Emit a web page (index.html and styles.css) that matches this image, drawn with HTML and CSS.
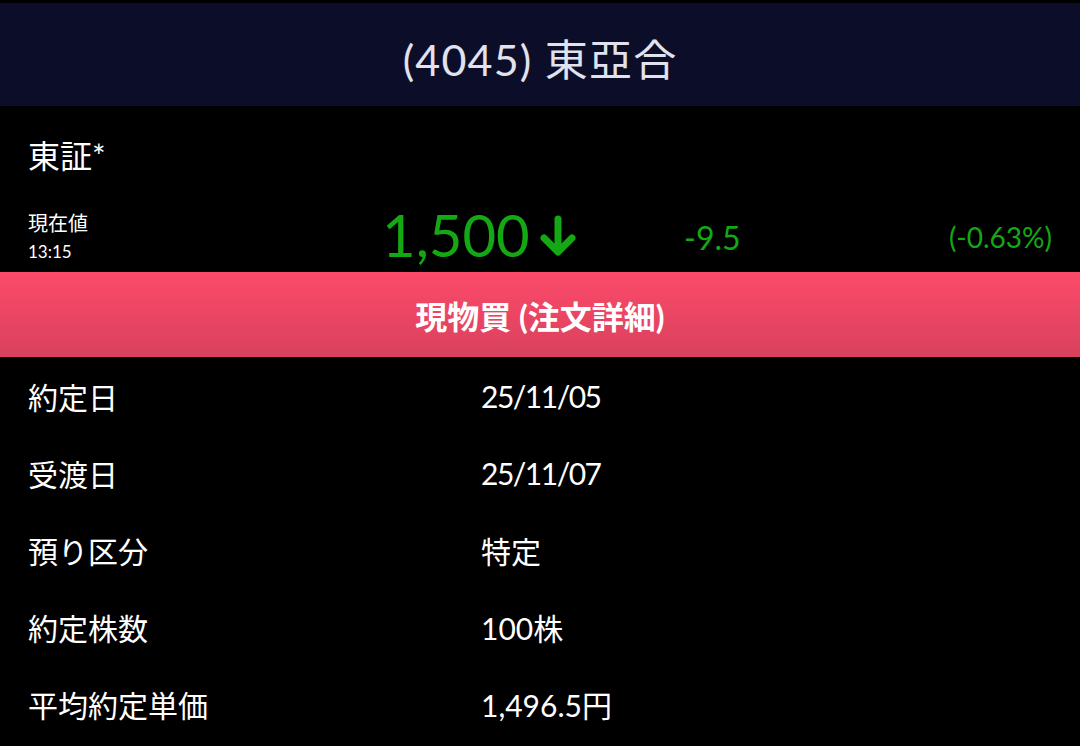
FILE: index.html
```html
<!DOCTYPE html>
<html lang="ja">
<head>
<meta charset="utf-8">
<link rel="stylesheet" href="styles.css">
</head>
<body>
<div class="page">
  <header class="title-bar">
    <h1 class="title">(4045) 東亞合</h1>
  </header>
  <section class="quote">
    <div class="market">東証*</div>
    <div class="price-row">
      <div class="price-label">
        <div class="label-now">現在値</div>
        <div class="label-time">13:15</div>
      </div>
      <div class="price">1,500<svg class="arrow" viewBox="0 0 44 44" width="44" height="44"><path d="M22 5 V37 M8 24 L22 38 L36 24" fill="none" stroke="#14a814" stroke-width="7" stroke-linecap="round" stroke-linejoin="round"/></svg></div>
      <div class="change">-9.5</div>
      <div class="pct">(-0.63%)</div>
    </div>
  </section>
  <div class="band">現物買 (注文詳細)</div>
  <section class="details">
    <div class="row"><div class="key">約定日</div><div class="val num">25/11/05</div></div>
    <div class="row"><div class="key">受渡日</div><div class="val num">25/11/07</div></div>
    <div class="row"><div class="key">預り区分</div><div class="val">特定</div></div>
    <div class="row"><div class="key">約定株数</div><div class="val">100株</div></div>
    <div class="row"><div class="key">平均約定単価</div><div class="val">1,496.5円</div></div>
  </section>
</div>
</body>
</html>
```

FILE: styles.css
```css
html, body {
  margin: 0;
  padding: 0;
  background: #000;
}
body {
  width: 1080px;
  height: 746px;
  overflow: hidden;
  font-family: "Lato", "Noto Sans CJK JP", sans-serif;
  color: #fff;
}
.page {
  padding-top: 3px;
}
.title-bar {
  height: 103px;
  background: #0c0e29;
  display: flex;
  align-items: center;
  justify-content: center;
}
.title {
  margin: 0;
  margin-top: 4px;
  font-weight: 400;
  font-size: 43px;
  color: #e2e2ee;
  letter-spacing: 1.2px;
}
.quote {
  padding: 0 28px;
  height: 166px;
  display: flex;
  flex-direction: column;
}
.market {
  font-size: 32px;
  margin-top: 30px;
  line-height: 40px;
}
.price-row {
  display: flex;
  align-items: center;
  margin-top: 33px;
}
.price-label {
  width: 354px;
  display: flex;
  flex-direction: column;
}
.label-now {
  font-size: 20px;
  line-height: 24px;
}
.label-time {
  font-size: 17px;
  line-height: 24px;
  margin-top: 5px;
}
.price {
  width: 302px;
  color: #14a814;
  font-size: 58px;
  line-height: 60px;
  display: flex;
  align-items: center;
  margin-top: -4px;
}
.arrow {
  margin-left: 6px;
  margin-top: 2px;
}
.change {
  color: #14a814;
  font-size: 32px;
  flex: 1;
}
.pct {
  color: #14a814;
  font-size: 28px;
}
.band {
  height: 85px;
  background: linear-gradient(#fd4a6a, #d8415d);
  display: flex;
  align-items: center;
  justify-content: center;
  font-weight: 700;
  font-size: 32px;
  color: #fff;
}
.details {
  padding: 0 28px;
}
.row {
  display: flex;
  align-items: center;
  height: 77px;
  font-size: 30px;
}
.key {
  width: 453px;
}
.val {
  flex: 1;
}
.num {
  letter-spacing: -1.5px;
}
```
